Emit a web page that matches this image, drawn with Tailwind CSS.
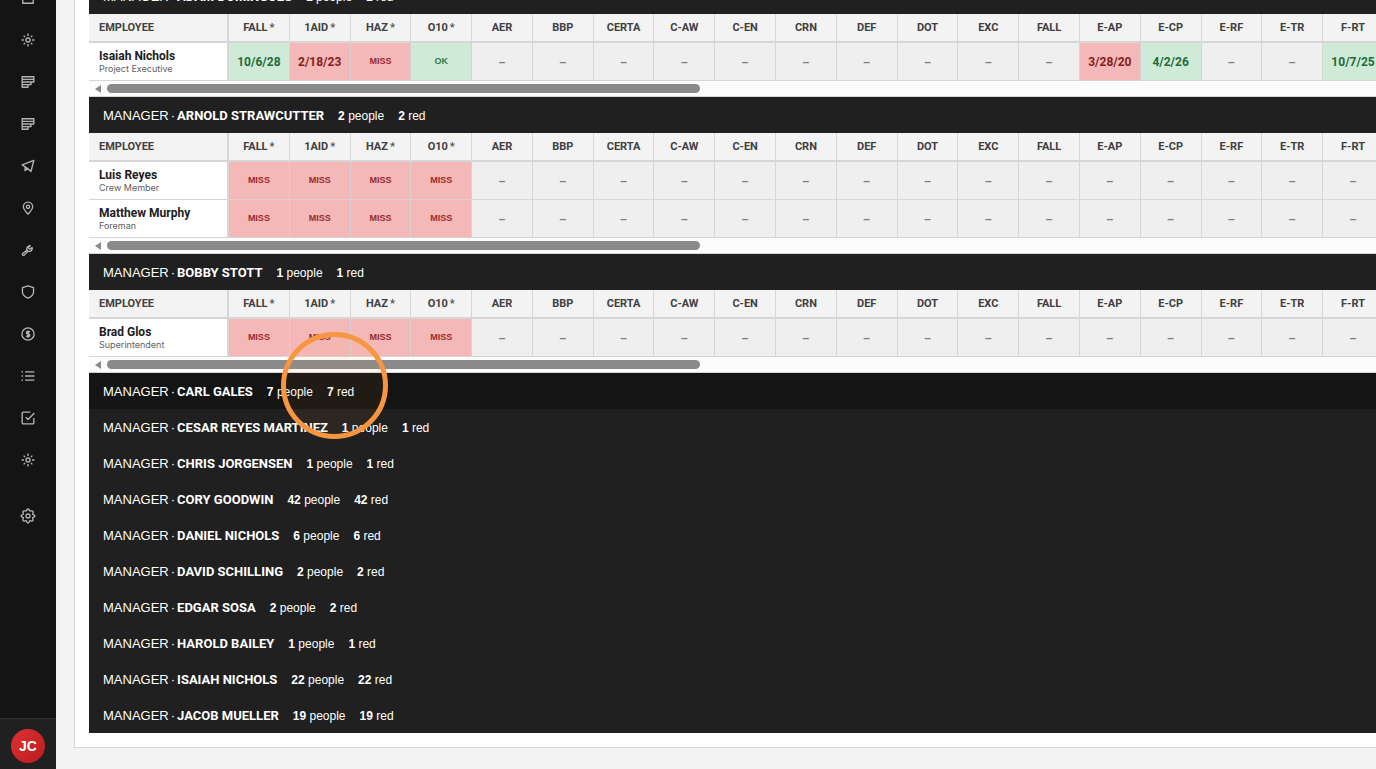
<!DOCTYPE html>
<html lang="en">
<head>
  <meta charset="UTF-8" />
  <meta name="viewport" content="width=device-width, initial-scale=1.0" />
  <title>Training Matrix</title>
  <script src="https://cdn.jsdelivr.net/npm/@tailwindcss/browser@4"></script>
</head>
<body class="flex h-screen overflow-hidden bg-[#f3f3f3] font-['Liberation_Sans',Arial,sans-serif] text-[#202020]">

  <!-- Sidebar -->
  <aside class="flex w-14 shrink-0 flex-col bg-[#141414] text-[#b4b4b4]">
    <nav id="nav" class="-mt-[23px] flex min-h-0 flex-1 flex-col overflow-hidden"></nav>
    <div class="flex h-[51px] shrink-0 justify-center border-t border-[#303030] bg-[#202020] pt-[10px]">
      <button class="h-[34px] w-[34px] rounded-full bg-linear-to-br from-[#e03030] to-[#b81c22] text-sm font-bold text-white">JC</button>
    </div>
  </aside>

  <!-- Scrolled to the end of the list -->
  <main class="flex min-w-0 flex-1 flex-col justify-end overflow-hidden pb-[21px] pl-[18px]">
    <div id="card" class="border-b border-l border-[#d6d6d6] bg-white pb-[14px] pl-[14px]"></div>
  </main>

  <!-- Click highlight -->
  <div class="pointer-events-none absolute top-[332px] left-[281px] h-[107px] w-[107px] rounded-full border-[5px] border-[#f89540] bg-[#f89540]/6"></div>

  <script>
    const sun = '<circle cx="12" cy="12" r="3.5"/><path d="M12 1v4M12 19v4M1 12h4M19 12h4M4.500 4.500l2.500 2.500M17 17l2.500 2.500M4.500 19.500L7 17M17 7l2.500-2.500"/>';
    const rows = '<path d="M2 3h20v4.500H2zM2 7.500h20V12H2zM2 12h15v4.500H2zM2 16.500h10V21H2z"/>';
    const icons = [
      ["Documents", '<path d="M3 3h18v18H3zM8 13h8M8 9h8"/>'],
      ["Daily", sun],
      ["Timesheets", rows],
      ["Reports", rows],
      ["Dispatch", '<path d="M22 2.500L2 10l5 3.500V20l4-4 6 5.500 5-19zM7 13.500l4 2.500"/>'],
      ["Locations", '<path d="M12 22.500c-4-4.500-8-8-8-12.500a8 8 0 0 1 16 0c0 4.500-4 8-8 12.500z"/><circle cx="12" cy="10" r="2.800"/>'],
      ["Tools", '<path d="M12.500 5.500a5 5 0 0 0-2 6.500L3 18a1.800 1.800 0 0 0 2.500 2.800l6.500-7a5 5 0 0 0 7-6l-3 2.500-2.500-.5-.5-2.500L16 4.500a5 5 0 0 0-3.500 1z"/>'],
      ["Safety", '<path d="M12 1.500l9.500 3V12c0 5-4.500 8.500-9.500 10.500C7 20.500 2.500 17 2.500 12V4.500z"/>'],
      ["Costs", '<circle cx="12" cy="12" r="10.500"/><path d="M15 9c-1-1.500-5.500-1.500-5.500.8 0 2.600 5.500 1.800 5.500 4.400 0 2.500-4.800 2.500-6 .7M12 6v12.500" stroke-width="2.800"/>'],
      ["Lists", '<path d="M7 5h16M7 12h16M7 19h16M1 5h2.500M1 12h2.500M1 19h2.500"/>'],
      ["Tasks", '<path d="M22 12v8a2 2 0 0 1-2 2H4a2 2 0 0 1-2-2V4a2 2 0 0 1 2-2h12M8 10.500l4 4L23 3.500"/>'],
      ["Weather", sun],
      ["Settings", '<circle cx="12" cy="12" r="3.500"/><path d="M12 0c2 0 2 2.800 3.400 3.400s3.300-1.200 4.900.4.200 3.400-.4 4.800S24 10 24 12s-3.500 2-4.100 3.400 2 3.300.4 4.900-3.500-.9-4.900-.3S14 24 12 24s-2-3.400-3.400-4-3.300 1.900-4.900.3-.2-3.500.4-4.900S0 14 0 12s3.500-2 4.100-3.400-2-3.200-.4-4.800 3.500.2 4.900-.4S10 0 12 0z"/>']
    ];

    document.getElementById("nav").innerHTML = icons.map(([label, shape]) => `
      <a href="#" aria-label="${label}" class="flex h-[42px] shrink-0 items-center justify-center last:mt-[14px]">
        <svg class="h-[14px] w-[14px] overflow-visible" viewBox="0 0 24 24" fill="none" stroke="currentColor" stroke-width="2.300" stroke-linejoin="round">${shape}</svg>
      </a>`).join("");

    const required = ["FALL", "1AID", "HAZ", "O10"];
    const courses = ["AER", "BBP", "CERTA", "C-AW", "C-EN", "CRN", "DEF", "DOT", "EXC", "FALL", "E-AP", "E-CP", "E-RF", "E-TR", "F-RT"];
    const missing = ["MISS", "MISS", "MISS", "MISS"];

    const managers = [
      { name: "ADAM DOMINGUES", people: 1, red: 1, crew: [
        { name: "Isaiah Nichols", role: "Project Executive",
          cells: ["+10/6/28", "2/18/23", "MISS", "OK", "", "", "", "", "", "", "", "", "", "", "3/28/20", "+4/2/26", "", "", "+10/7/25"] }
      ] },
      { name: "ARNOLD STRAWCUTTER", people: 2, red: 2, crew: [
        { name: "Luis Reyes", role: "Crew Member", cells: missing },
        { name: "Matthew Murphy", role: "Foreman", cells: missing }
      ] },
      { name: "BOBBY STOTT", people: 1, red: 1, crew: [
        { name: "Brad Glos", role: "Superintendent", cells: missing }
      ] },
      { name: "CARL GALES", people: 7, red: 7, active: true },
      { name: "CESAR REYES MARTINEZ", people: 1, red: 1 },
      { name: "CHRIS JORGENSEN", people: 1, red: 1 },
      { name: "CORY GOODWIN", people: 42, red: 42 },
      { name: "DANIEL NICHOLS", people: 6, red: 6 },
      { name: "DAVID SCHILLING", people: 2, red: 2 },
      { name: "EDGAR SOSA", people: 2, red: 2 },
      { name: "HAROLD BAILEY", people: 1, red: 1 },
      { name: "ISAIAH NICHOLS", people: 22, red: 22 },
      { name: "JACOB MUELLER", people: 19, red: 19 }
    ];

    function cell(value) {
      if (!value) return '<td class="border-r border-b border-[#d6d6d6] bg-[#efefef] p-0 text-center text-xs font-bold text-[#808080]">–</td>';
      if (value === "MISS") return `<td class="border-r border-b border-[#dcd0d0] bg-[#f4b8b8] p-0 text-center text-[9px] font-bold text-[#982a2a]">MISS</td>`;
      if (value === "OK") return `<td class="border-r border-b border-[#d6d6d6] bg-[#cfead6] p-0 text-center text-[9px] font-bold text-[#2f7d46]">OK</td>`;
      if (value[0] === "+") return `<td class="border-r border-b border-[#d6d6d6] bg-[#cfead6] p-0 text-center font-[Roboto] text-xs font-bold text-[#1f6b3a]">${value.slice(1)}</td>`;
      return `<td class="border-r border-b border-[#dcd0d0] bg-[#f4b8b8] p-0 text-center font-[Roboto] text-xs font-bold text-[#861c1c]">${value}</td>`;
    }

    function matrix(crew) {
      const th = "border-r border-b-2 border-[#d6d6d6] p-0 pt-[2px]";
      const count = required.length + courses.length;
      return `
        <div class="overflow-hidden">
          <table class="w-[1295px] table-fixed border-separate border-spacing-0">
            <thead>
              <tr class="h-[29px] bg-[#f3f3f3] font-[Roboto] text-[11px] text-[#404040]">
                <th class="w-[140px] border-r-2 border-b-2 border-[#d6d6d6] p-0 pt-[2px] pl-[10px] text-left">EMPLOYEE</th>
                ${required.map(c => `<th class="${th}">${c}<span class="ml-[2px] text-[#555]">*</span></th>`).join("")}
                ${courses.map(c => `<th class="${th}">${c}</th>`).join("")}
              </tr>
            </thead>
            <tbody>
              ${crew.map(p => `
              <tr class="h-[38px]">
                <td class="border-r-2 border-b border-[#d6d6d6] bg-white p-0 pl-[10px]">
                  <div class="font-[Roboto] text-xs leading-[14px] font-bold">${p.name}</div>
                  <div class="font-[Inter] text-[9px] leading-3 text-[#606060]">${p.role}</div>
                </td>
                ${Array.from({ length: count }, (_, i) => cell(p.cells[i])).join("")}
              </tr>`).join("")}
            </tbody>
          </table>
          <div class="flex h-4 items-center border-b border-[#d6d6d6] bg-[#fcfcfc] pl-[6px]">
            <svg class="mr-[6px] h-2 w-[6px] shrink-0" viewBox="0 0 6 8" fill="#8a8a8a"><path d="M6 0v8L0 4z"/></svg>
            <div class="h-[9px] w-[593px] rounded-full bg-[#8a8a8a]"></div>
          </div>
        </div>`;
    }

    document.getElementById("card").innerHTML = managers.map(m => `
      <section>
        <button class="${m.active ? "bg-[#141414]" : "bg-[#202020]"} flex h-9 w-full items-center gap-[14px] pt-px pl-[14px] text-left text-xs text-white">
          <span class="flex gap-[2px] text-[13px]"><span>MANAGER</span><span>·</span><b class="font-[Roboto]">${m.name}</b></span>
          <span><b>${m.people}</b> people</span>
          <span><b>${m.red}</b> red</span>
        </button>
        ${m.crew ? matrix(m.crew) : ""}
      </section>`).join("");
  </script>

</body>
</html>
